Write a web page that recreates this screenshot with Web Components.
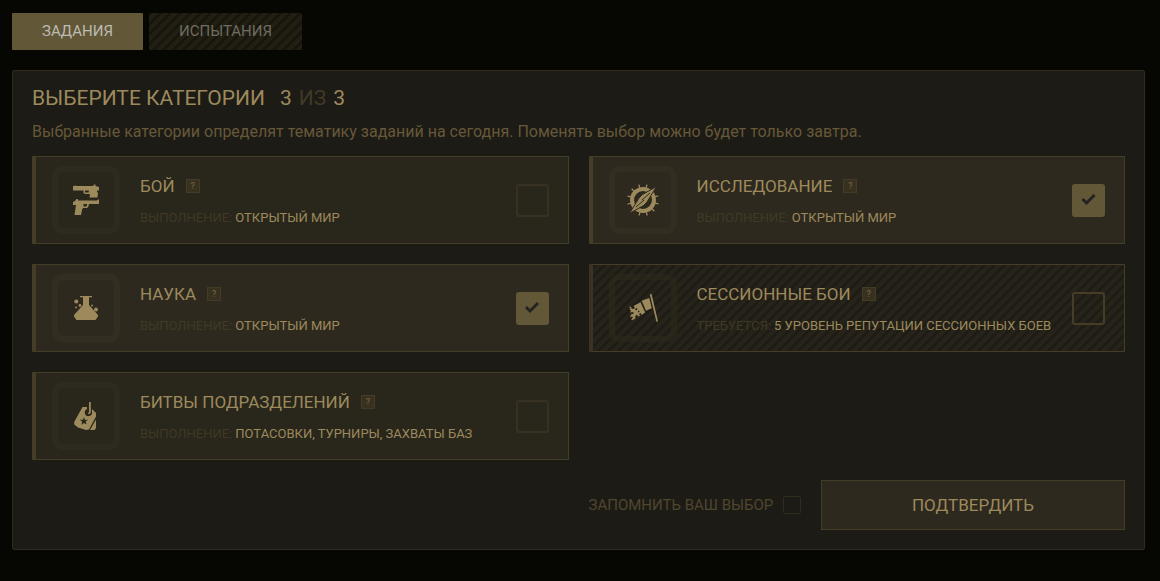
<!DOCTYPE html>
<html lang="ru">
<head>
<meta charset="utf-8">
<meta name="viewport" content="width=device-width, initial-scale=1">
<title>Задания</title>
<style>
  :root {
    --gold: #9d8a5c;
    --dim: #675838;
    --faint: #403925;
    --line: #463d27;
    --accent: #625737;
    --card: #29261b;
    --card-on: #2e291e;
  }
  html { background: #060702; }
  body {
    margin: 0;
    padding: 13px 15px 20px 12px;
    color: var(--gold);
    font-family: Roboto, "Noto Sans", sans-serif;
  }
</style>
</head>
<body>
<quest-page></quest-page>

<template id="page-template">
  <style>
    :host { display: block; }
    nav { display: flex; gap: 6px; margin-bottom: 20px; }
    .grid { display: grid; grid-template-columns: 1fr 1fr; gap: 20px; }
    .confirm { grid-column: 2; grid-row: 4; }
  </style>
  <nav>
    <quest-tab active>ЗАДАНИЯ</quest-tab>
    <quest-tab>ИСПЫТАНИЯ</quest-tab>
  </nav>
  <quest-panel>
    <span slot="title">ВЫБЕРИТЕ КАТЕГОРИИ</span>
    <span slot="count">3</span>
    <span slot="total">3</span>
    <span slot="about">Выбранные категории определят тематику заданий на сегодня. Поменять выбор можно будет только завтра.</span>
    <div class="grid">
      <quest-card name="БОЙ" term="ВЫПОЛНЕНИЕ:" icon="guns">ОТКРЫТЫЙ МИР</quest-card>
      <quest-card name="ИССЛЕДОВАНИЕ" term="ВЫПОЛНЕНИЕ:" icon="compass" selected>ОТКРЫТЫЙ МИР</quest-card>
      <quest-card name="НАУКА" term="ВЫПОЛНЕНИЕ:" icon="flask" selected>ОТКРЫТЫЙ МИР</quest-card>
      <quest-card name="СЕССИОННЫЕ БОИ" term="ТРЕБУЕТСЯ:" icon="flag" locked>5 УРОВЕНЬ РЕПУТАЦИИ СЕССИОННЫХ БОЕВ</quest-card>
      <quest-card name="БИТВЫ ПОДРАЗДЕЛЕНИЙ" term="ВЫПОЛНЕНИЕ:" icon="tags">ПОТАСОВКИ, ТУРНИРЫ, ЗАХВАТЫ БАЗ</quest-card>
      <quest-confirm class="confirm">ПОДТВЕРДИТЬ</quest-confirm>
    </div>
  </quest-panel>
</template>

<template id="tab-template">
  <style>
    :host { display: block; }
    button {
      display: block; height: 37px; padding: 0 30px; border: 0; border-radius: 1px;
      font: 15px/37px Roboto, sans-serif; color: #6f6c62; cursor: pointer;
      background: linear-gradient(135deg, #17150d 0 20%, #211e12 20% 50%, #17150d 50% 70%, #211e12 70%) 0 0 / 10px 10px;
    }
    :host([active]) button { background: var(--accent); color: #bdbbb3; }
  </style>
  <button type="button"><slot></slot></button>
</template>

<template id="panel-template">
  <style>
    :host {
      display: block; padding: 15px 19px 19px; background: #1c1b16;
      border: 1px solid #302b1c; border-radius: 2px;
    }
    h1 { display: flex; gap: 7px; margin: 0; font-size: 21px; line-height: 24px; font-weight: 400; }
    .count { margin-left: 8px; }
    .of { color: var(--faint); }
    p { margin: 12px 0 14px; font-size: 16px; line-height: 20px; color: var(--dim); }
  </style>
  <h1><slot name="title"></slot><span class="count"><slot name="count"></slot></span><span class="of">ИЗ</span><slot name="total"></slot></h1>
  <p><slot name="about"></slot></p>
  <slot></slot>
</template>

<template id="check-template">
  <style>
    :host { display: block; flex: none; }
    input {
      appearance: none; display: grid; place-items: center; box-sizing: border-box;
      width: 33px; height: 33px; margin: 0; border: 2px solid #383123; border-radius: 3px; cursor: pointer;
    }
    input:checked { background: var(--accent); border-color: var(--accent); }
    input:checked::before {
      content: ""; width: 16px; height: 12px; background: #222222;
      clip-path: polygon(1px 6px, 3px 4px, 6px 7px, 13px 0, 15px 2px, 6px 11px);
    }
    input:disabled { border-color: #463d27; }
  </style>
  <input type="checkbox">
</template>

<template id="card-template">
  <style>
    :host {
      display: flex; align-items: center; gap: 20px; box-sizing: border-box; min-height: 88px; min-width: 0;
      padding: 9px 19px 9px 16px; background: var(--card);
      border: 1px solid var(--line); border-left-width: 4px; border-radius: 1px;
    }
    :host([selected]) { background: var(--card-on); }
    :host([locked]) {
      background: linear-gradient(135deg, #1f1c15 0 20%, #26231b 20% 50%, #1f1c15 50% 70%, #26231b 70%) 0 0 / 10px 10px;
      border-left-color: #3a3323;
    }
    .frame {
      flex: none; display: grid; place-items: center; box-sizing: border-box;
      width: 68px; height: 68px; border: 6px solid #2e2a1f; border-radius: 11px;
    }
    :host([selected]) .frame { border-color: #322e21; }
    :host([locked]) .frame { border-color: #2b291b99; }
    svg { display: block; width: 32px; height: 32px; fill: var(--gold); }
    .text { flex: 1; min-width: 0; }
    .head { display: flex; align-items: center; gap: 11px; }
    h2 { margin: 0; font-size: 17px; line-height: 24px; font-weight: 400; }
    .hint {
      box-sizing: border-box; width: 14px; height: 14px; padding: 0; border: 1px solid #443b26;
      background: #383120; color: #786943; font: 9px/12px Roboto, sans-serif; cursor: help;
    }
    .info { display: flex; gap: 3px; margin: 12px 0 0; font-size: 13px; line-height: 16px; white-space: nowrap; }
    .term { color: var(--faint); }
  </style>
  <div class="frame"><svg viewBox="0 0 32 32" aria-hidden="true"></svg></div>
  <div class="text">
    <div class="head"><h2></h2><button class="hint" type="button" aria-label="Подробнее">?</button></div>
    <p class="info"><span class="term"></span><span><slot></slot></span></p>
  </div>
  <check-box></check-box>
</template>

<template id="confirm-template">
  <style>
    :host { display: flex; align-items: center; gap: 20px; }
    .remember { flex: 1; display: flex; align-items: center; justify-content: space-between; }
    label { font-size: 15px; line-height: 20px; color: #50462d; }
    input {
      appearance: none; box-sizing: border-box; width: 18px; height: 18px; margin: 0;
      border: 1px solid #302c1d; border-radius: 2px; cursor: pointer;
    }
    input:checked { background: var(--accent); }
    button {
      height: 50px; flex: 0 0 304px; border: 1px solid var(--line); background: var(--card-on);
      color: var(--gold); font: 17px/24px Roboto, sans-serif; cursor: pointer;
    }
  </style>
  <div class="remember">
    <label for="remember">ЗАПОМНИТЬ ВАШ ВЫБОР</label>
    <input id="remember" type="checkbox">
  </div>
  <button type="button"><slot></slot></button>
</template>

<script>
  const icons = {
    guns: `<path fill-rule="evenodd" d="M3 2h2V1.500h1V2h17l1-1.500h1.500V2L29 3v3.500h-2V8l1 1-.5 4.500h-8L20 10h-5l-1.500-1V6.500H3zM15 6.500v2h3.500L19 6.500z"/>
      <path fill-rule="evenodd" d="M3 18L5 17l1.500-2H8v1.500h19L28 15.500h1V20H19l-.8 3-1.200 1h-4l-.7 1-1.300 6H4.500L6 21H3zM13.500 20v2.500h3l.7-2.500z"/>`,
    compass: `<g fill="none" stroke="#9d8a5c"><circle cx="16" cy="16" r="11" stroke-width="4"/>
      <circle cx="16" cy="16" r="14.200" stroke-width="3.400" pathLength="120" stroke-dasharray="1.700 8.300" stroke-dashoffset="-4"/></g>
      <path stroke="#2e291e" d="M29.500 2.500L20 18l-3.500 3.500L2.500 29.500 12 14l3.500-3.500z"/>
      <path fill="none" stroke="#2e291e" d="M23 9L15 16M9 23L17 16"/>`,
    flask: `<path d="M10 4h12v1.200h-3V13l9 10v1.500L25.500 28h-19L4 24.500V23l9-10V5.200h-3z"/>
      <circle cx="6.300" cy="9.500" r="2"/><circle cx="10" cy="13.500" r="1.400"/><circle cx="6" cy="15.500" r="1"/>
      <circle cx="22" cy="13.600" r="1"/><circle cx="26" cy="17.400" r="2"/>`,
    flag: `<path d="M22.800 2.500l1.800-.5L31 29.500l-1.500.4zM14.700 8.800l7.600-2.700 2.500 10.200-5.800 2.500z"/>
      <path d="M13.500 10.300l4.700 10.200-3.700 2.500-.5-2-2 1 1 2-2 .5-1-2-2 2 .5 2-3 1.500-1.500-.5 2-2-1-1-2 1 1-3 3-1-1-1.500-3 .5 1-2-1.500-1 1-1-1.500-1.500 2-.5.500 2 2 .5 1.500-1-1.500-2z"/>
      <path fill="#23201a" d="M8 17l2-1 .5 1.500-1.500 1zM11 19l1-.5.500 1.500-1.500.5z"/>`,
    tags: `<path d="M12.500 7H17v2.200a3.600 3.600 0 1 0 4.800 2L22 9l4 4v3.500L19 29.500l-3 .5-8-2.500-3.800-3V22z"/>
      <path d="M19 2h1.800v7.500H19zM26 19.500V28l-1.500 2H20z"/>
      <circle cx="18.500" cy="12.500" r="3.200" fill="#29261b"/>
      <path d="M19 9h1.800v3.500a2 2 0 0 1-3 1L19 12z"/>
      <path fill="#29261b" d="M14 17l.9 2.900 3-.1-2.300 1.900 1.100 2.900-2.700-1.600-2.600 1.700.8-3-2.400-1.900 3.100-.1z"/>`
  };

  class Base extends HTMLElement {
    mount(id) {
      const root = this.attachShadow({ mode: "open" });
      root.append(document.getElementById(id).content.cloneNode(true));
      return root;
    }
  }
  customElements.define("quest-tab", class extends Base {
    constructor() { super(); this.mount("tab-template"); }
  });
  customElements.define("quest-panel", class extends Base {
    constructor() { super(); this.mount("panel-template"); }
  });
  customElements.define("check-box", class extends Base {
    connectedCallback() {
      if (this.shadowRoot) return;
      const input = this.mount("check-template").querySelector("input");
      input.checked = this.hasAttribute("checked");
      input.disabled = this.hasAttribute("disabled");
      input.setAttribute("aria-label", this.getAttribute("label") || "");
    }
  });
  customElements.define("quest-card", class extends Base {
    connectedCallback() {
      if (this.shadowRoot) return;
      const root = this.mount("card-template");
      const name = this.getAttribute("name");
      root.querySelector("h2").textContent = name;
      root.querySelector(".term").textContent = this.getAttribute("term");
      root.querySelector("svg").innerHTML = icons[this.getAttribute("icon")];
      const old = root.querySelector("check-box");
      const check = document.createElement("check-box");
      check.setAttribute("label", name);
      check.toggleAttribute("checked", this.hasAttribute("selected"));
      check.toggleAttribute("disabled", this.hasAttribute("locked"));
      old.replaceWith(check);
    }
  });
  customElements.define("quest-confirm", class extends Base {
    constructor() { super(); this.mount("confirm-template"); }
  });
  customElements.define("quest-page", class extends Base {
    constructor() { super(); this.mount("page-template"); }
  });
</script>
</body>
</html>
